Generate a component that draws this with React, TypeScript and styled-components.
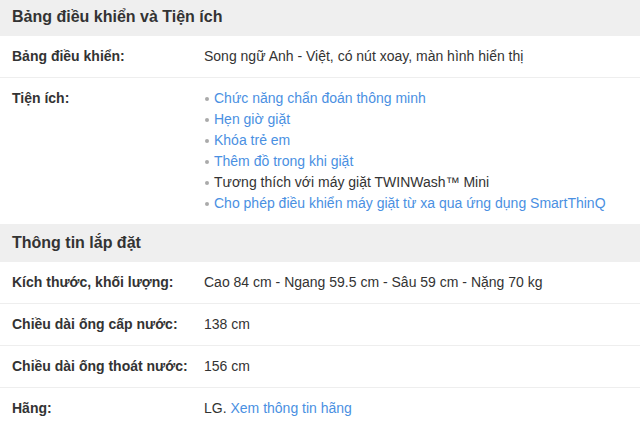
import React from 'react';
import styled, { createGlobalStyle } from 'styled-components';

const GlobalStyle = createGlobalStyle`
  body {
    margin: 0;
    background: #fff;
    font-family: 'Liberation Sans', Arial, sans-serif;
    color: #333;
  }
`;

const Wrapper = styled.div`
  margin-top: -2px;
  width: 640px;
`;

const SectionTitle = styled.h3`
  margin: 0;
  background: #efefef;
  height: 38px;
  line-height: 38px;
  padding: 0 12px;
  font-size: 16px;
  font-weight: bold;
  color: #333;
`;

const Row = styled.div<{ $last?: boolean }>`
  display: flex;
  padding: 10px 12px;
  font-size: 14px;
  line-height: 21px;
  border-bottom: ${(p) => (p.$last ? 'none' : '1px solid #eee')};
`;

const Label = styled.div`
  width: 192px;
  flex-shrink: 0;
  font-weight: bold;
`;

const Value = styled.div`
  flex: 1;
`;

const List = styled.ul`
  margin: 0;
  padding: 0;
  list-style: none;
`;

const Item = styled.li<{ $plain?: boolean }>`
  display: flex;
  align-items: center;
  color: ${(p) => (p.$plain ? '#333' : '#4a90e2')};
  &::before {
    content: '';
    width: 4px;
    height: 4px;
    border-radius: 50%;
    background: #aaa;
    margin: 1px 5px 0 1px;
  }
`;

const Link = styled.a`
  color: #4a90e2;
  text-decoration: none;
`;

const features = [
  { text: 'Chức năng chẩn đoán thông minh' },
  { text: 'Hẹn giờ giặt' },
  { text: 'Khóa trẻ em' },
  { text: 'Thêm đồ trong khi giặt' },
  { text: 'Tương thích với máy giặt TWINWash™ Mini', plain: true },
  { text: 'Cho phép điều khiển máy giặt từ xa qua ứng dụng SmartThinQ' },
];

const App = () => {
  return (
    <Wrapper>
      <GlobalStyle />
      <SectionTitle>Bảng điều khiển và Tiện ích</SectionTitle>
      <Row>
        <Label>Bảng điều khiển:</Label>
        <Value>Song ngữ Anh - Việt, có nút xoay, màn hình hiển thị</Value>
      </Row>
      <Row $last>
        <Label>Tiện ích:</Label>
        <Value>
          <List>
            {features.map((f) => (
              <Item key={f.text} $plain={f.plain}>
                {f.text}
              </Item>
            ))}
          </List>
        </Value>
      </Row>
      <SectionTitle>Thông tin lắp đặt</SectionTitle>
      <Row>
        <Label>Kích thước, khối lượng:</Label>
        <Value>Cao 84 cm - Ngang 59.5 cm - Sâu 59 cm - Nặng 70 kg</Value>
      </Row>
      <Row>
        <Label>Chiều dài ống cấp nước:</Label>
        <Value>138 cm</Value>
      </Row>
      <Row>
        <Label>Chiều dài ống thoát nước:</Label>
        <Value>156 cm</Value>
      </Row>
      <Row $last>
        <Label>Hãng:</Label>
        <Value>
          LG. <Link href="#">Xem thông tin hãng</Link>
        </Value>
      </Row>
    </Wrapper>
  );
};

export default App;
